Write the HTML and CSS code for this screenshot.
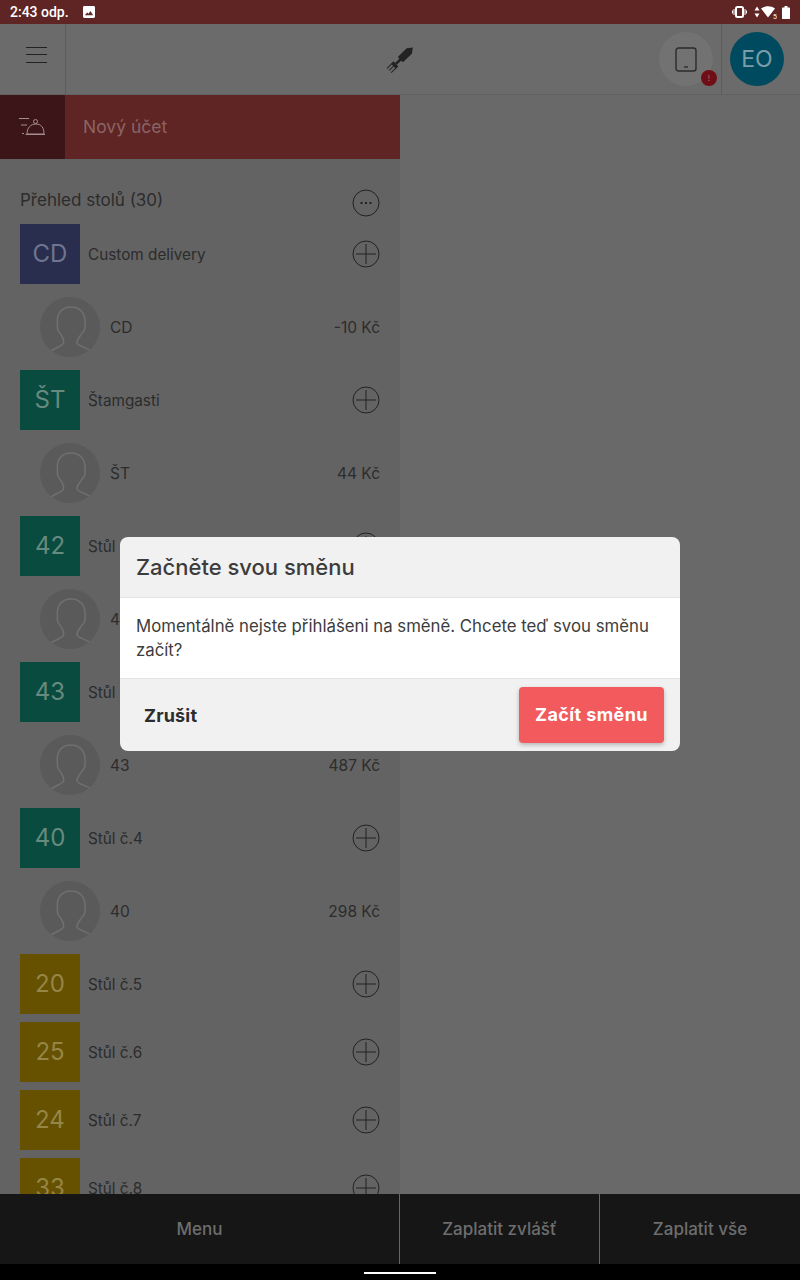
FILE: index.html
```html
<!DOCTYPE html>
<html lang="cs">
<head>
	<meta charset="UTF-8">
	<title>Přehled stolů</title>
	<link rel="stylesheet" href="styles.css">
</head>
<body>
	<svg class="defs" width="0" height="0">
		<symbol id="plus" viewBox="0 0 28 28">
			<circle cx="14" cy="14" r="13" fill="none" stroke="#222" stroke-width="1"/>
			<path d="M14 4V24M4 14H24" stroke="#222" stroke-width="1"/>
		</symbol>
		<symbol id="person" viewBox="0 0 60 60">
			<path d="M10 55C15 50 22 50 23.500 46C24.500 42 22 40 20 36C18 35 17 31 17.500 28C16 16 22 10 31 10C40 10 46 16 45 28C45.500 31 44 35 42 36C40 40 36.500 42 37 46C39 50 47 50 52 55" fill="none" stroke="#707070" stroke-width="1.500"/>
		</symbol>
	</svg>

	<div class="status-bar">
		<span class="clock">2:43 odp.</span>
		<svg class="status-image" width="12" height="12" viewBox="0 0 13 13">
			<rect width="13" height="13" rx="1.500" fill="#fff"/>
			<path d="M2 10L4.500 7L6 8.500L8 5.500L11 10Z" fill="#5f2424"/>
		</svg>
		<span class="status-right">
			<svg width="15" height="12" viewBox="0 0 15 12">
				<rect x="4" y="1" width="7" height="10" rx="1.500" fill="none" stroke="#fff" stroke-width="2"/>
				<path d="M2 3V9M0.500 4.500V7.500M13 3V9M14.500 4.500V7.500" stroke="#fff"/>
			</svg>
			<svg class="status-arrows" width="6" height="12" viewBox="0 0 6 12">
				<path d="M3 0.500L5.500 4.500H0.500ZM3 11.500L5.500 7.500H0.500Z" fill="#fff"/>
			</svg>
			<svg class="status-wifi" width="16" height="13" viewBox="0 0 16 13">
				<path d="M0 2.500C4 -0.500 10 -0.500 14 2.500L7 11.500Z" fill="#fff"/>
				<text x="12" y="12.500" class="wifi-s">5</text>
			</svg>
			<svg class="status-battery" width="8" height="13" viewBox="0 0 8 13">
				<path d="M2.500 0H5.500V1.500H7.500A.5 .5 0 0 1 8 2V12.500A.5 .5 0 0 1 7.500 13H.5A.5 .5 0 0 1 0 12.500V2A.5 .5 0 0 1 .5 1.500H2.500Z" fill="#fff"/>
			</svg>
		</span>
	</div>

	<div class="app">
		<div class="top-bar">
			<div class="menu-btn">
				<span class="burger"></span>
			</div>
			<div class="logo">
				<svg width="30" height="30" viewBox="0 0 30 30">
					<g transform="rotate(-44 15 15)" fill="#222">
						<path d="M-1.500 11.500H6V12.500H-1.500ZM-1.500 14.500H6V15.500H-1.500ZM-1.500 17.500H6V18.500H-1.500Z"/>
						<path d="M4.500 11.500H8V18.500H4.500Z"/>
						<path d="M8 13.700H15V16.300H8Z"/>
						<path d="M14 12A.8 .8 0 0 1 14.800 11.300H26.500L31.500 15L26.500 18.700H14.800A.8 .8 0 0 1 14 18Z"/>
					</g>
				</svg>
			</div>
			<div class="device">
				<svg width="22" height="25" viewBox="0 0 22 25">
					<rect x="1" y="1" width="20" height="23" rx="2.500" fill="none" stroke="#2b2b2b" stroke-width="1.400"/>
					<path d="M9 20H13" stroke="#2b2b2b" stroke-width="1.400"/>
				</svg>
				<span class="badge">!</span>
			</div>
			<div class="user-cell">
				<span class="user">EO</span>
			</div>
		</div>

		<div class="main">
			<div class="side">
				<div class="new-bill">
					<div class="new-bill-icon">
						<svg width="26" height="20" viewBox="0 0 26 20">
							<g fill="none" stroke="#a58e8e" stroke-width="1">
								<path d="M0 1.500H10M2 8H8M3 16.500H5"/>
								<path d="M8 17C8 11 11.500 7 17 7C22.500 7 25 11 25 17ZM6.500 17.500H26"/>
								<circle cx="16.500" cy="4.500" r="2"/>
							</g>
						</svg>
					</div>
					<div class="new-bill-text">Nový účet</div>
				</div>

				<div class="tables">
					<div class="tables-head">
						<span class="tables-title">Přehled stolů (30)</span>
						<svg width="28" height="28" viewBox="0 0 28 28">
							<circle cx="14" cy="14" r="13" fill="none" stroke="#222" stroke-width="1"/>
							<path d="M8.500 14H10.500M13 14H15M17.500 14H19.500" stroke="#222" stroke-width="2"/>
						</svg>
					</div>

					<div class="table">
						<span class="tile blue">CD</span>
						<span class="table-name">Custom delivery</span>
						<svg class="add"><use href="#plus"/></svg>
					</div>
					<div class="guest">
						<span class="avatar"><svg width="60" height="60"><use href="#person"/></svg></span>
						<span class="guest-name">CD</span>
						<span class="price">-10 Kč</span>
					</div>

					<div class="table">
						<span class="tile green">ŠT</span>
						<span class="table-name">Štamgasti</span>
						<svg class="add"><use href="#plus"/></svg>
					</div>
					<div class="guest">
						<span class="avatar"><svg width="60" height="60"><use href="#person"/></svg></span>
						<span class="guest-name">ŠT</span>
						<span class="price">44 Kč</span>
					</div>

					<div class="table">
						<span class="tile green">42</span>
						<span class="table-name">Stůl č.2</span>
						<svg class="add"><use href="#plus"/></svg>
					</div>
					<div class="guest">
						<span class="avatar"><svg width="60" height="60"><use href="#person"/></svg></span>
						<span class="guest-name">42</span>
					</div>

					<div class="table">
						<span class="tile green">43</span>
						<span class="table-name">Stůl č.3</span>
						<svg class="add"><use href="#plus"/></svg>
					</div>
					<div class="guest">
						<span class="avatar"><svg width="60" height="60"><use href="#person"/></svg></span>
						<span class="guest-name">43</span>
						<span class="price">487 Kč</span>
					</div>

					<div class="table">
						<span class="tile green">40</span>
						<span class="table-name">Stůl č.4</span>
						<svg class="add"><use href="#plus"/></svg>
					</div>
					<div class="guest">
						<span class="avatar"><svg width="60" height="60"><use href="#person"/></svg></span>
						<span class="guest-name">40</span>
						<span class="price">298 Kč</span>
					</div>

					<div class="table free">
						<span class="tile gold">20</span>
						<span class="table-name">Stůl č.5</span>
						<svg class="add"><use href="#plus"/></svg>
					</div>
					<div class="table free">
						<span class="tile gold">25</span>
						<span class="table-name">Stůl č.6</span>
						<svg class="add"><use href="#plus"/></svg>
					</div>
					<div class="table free">
						<span class="tile gold">24</span>
						<span class="table-name">Stůl č.7</span>
						<svg class="add"><use href="#plus"/></svg>
					</div>
					<div class="table free">
						<span class="tile gold">33</span>
						<span class="table-name">Stůl č.8</span>
						<svg class="add"><use href="#plus"/></svg>
					</div>
				</div>
			</div>
			<div class="detail"></div>
		</div>

		<div class="bottom-bar">
			<div class="bottom-btn menu">Menu</div>
			<div class="bottom-btn split">Zaplatit zvlášť</div>
			<div class="bottom-btn all">Zaplatit vše</div>
		</div>

		<div class="dialog-layer">
			<div class="dialog">
				<div class="dialog-title">Začněte svou směnu</div>
				<div class="dialog-body">Momentálně nejste přihlášeni na směně. Chcete teď svou směnu začít?</div>
				<div class="dialog-actions">
					<span class="cancel">Zrušit</span>
					<span class="confirm">Začít směnu</span>
				</div>
			</div>
		</div>
	</div>

	<div class="nav-bar"><span class="home"></span></div>
</body>
</html>
```

FILE: styles.css
```css
* {
	box-sizing: border-box;
}
html, body {
	height: 100%;
}
body {
	margin: 0;
	height: 1280px;
	overflow: hidden;
	display: flex;
	flex-direction: column;
	background: #000;
	font-family: "Inter", "Liberation Sans", sans-serif;
	color: #2c2c2c;
}
.defs {
	position: absolute;
}

/* status bar */
.status-bar {
	height: 24px;
	flex: none;
	display: flex;
	align-items: center;
	padding: 0 10px;
	background: #5f2424;
	color: #fff;
}
.clock {
	font-family: "Roboto", sans-serif;
	font-size: 14px;
	font-weight: 500;
}
.status-image {
	margin-left: 14px;
}
.status-right {
	margin-left: auto;
	display: flex;
	align-items: center;
}
.status-arrows {
	margin-left: 7px;
}
.status-wifi {
	margin-left: 1px;
}
.status-battery {
	margin-left: 5px;
}
.wifi-s {
	font-family: "Roboto", sans-serif;
	font-size: 7px;
	fill: #fff;
}

.app {
	flex: 1;
	position: relative;
	display: flex;
	flex-direction: column;
	min-height: 0;
}

/* top bar */
.top-bar {
	height: 71px;
	flex: none;
	display: flex;
	align-items: center;
	background: #6b6b6b;
	border-bottom: 1px solid #616161;
}
.menu-btn {
	width: 66px;
	height: 100%;
	display: flex;
	align-items: center;
	justify-content: center;
	border-right: 1px solid #5c5c5c;
	padding: 0 0 8px 7px;
}
.burger {
	width: 21px;
	height: 16px;
	border-top: 1.5px solid #222;
	border-bottom: 1.5px solid #222;
	position: relative;
}
.burger::after {
	content: "";
	position: absolute;
	left: 0;
	right: 0;
	top: 5.5px;
	height: 1.5px;
	background: #222;
}
.logo {
	margin-left: 320px;
	width: 30px;
	height: 30px;
}
.device {
	margin-left: 243px;
	width: 54px;
	height: 54px;
	border-radius: 50%;
	background: #727272;
	display: flex;
	align-items: center;
	justify-content: center;
	position: relative;
}
.badge {
	position: absolute;
	right: -4px;
	bottom: 0;
	width: 16px;
	height: 16px;
	border-radius: 50%;
	background: #700e15;
	color: #b07474;
	font-size: 8px;
	line-height: 16px;
	text-align: center;
}
.user-cell {
	margin-left: 8px;
	height: 100%;
	padding-left: 8px;
	border-left: 1px solid #5c5c5c;
	display: flex;
	align-items: center;
}
.user {
	width: 54px;
	height: 54px;
	border-radius: 50%;
	background: #004a60;
	color: #7a9da8;
	font-size: 23px;
	line-height: 54px;
	text-align: center;
}

/* left column */
.main {
	flex: 1;
	display: flex;
	min-height: 0;
}
.side {
	width: 400px;
	flex: none;
	background: #636363;
	overflow: hidden;
}
.detail {
	flex: 1;
	background: #696969;
}
.new-bill {
	height: 64px;
	display: flex;
	background: #5f2424;
}
.new-bill-icon {
	width: 65px;
	background: #3c1518;
	display: flex;
	align-items: center;
	justify-content: center;
	padding-right: 1px;
}
.new-bill-text {
	margin-left: 18px;
	font-size: 17.5px;
	line-height: 64px;
	color: #8a6464;
}
.tables {
	padding: 30px 20px 0;
}
.tables-head {
	display: flex;
	justify-content: space-between;
	height: 35px;
	font-size: 17px;
}
.tables-title {
	padding-top: 1px;
}
.table {
	display: flex;
	align-items: center;
	height: 60px;
	margin-bottom: 13px;
}
.table.free {
	margin-bottom: 8px;
}
.tile {
	width: 60px;
	height: 60px;
	flex: none;
	font-size: 24px;
	line-height: 60px;
	text-align: center;
}
.blue {
	background: #292d4e;
	color: #6f7590;
}
.green {
	background: #0a4b3f;
	color: #678a7f;
}
.gold {
	background: #655100;
	color: #958547;
}
.table-name {
	margin-left: 8px;
	font-size: 15.3px;
}
.add {
	margin-left: auto;
	width: 28px;
	height: 28px;
}
.guest {
	display: flex;
	align-items: center;
	height: 60px;
	margin-bottom: 13px;
	padding-left: 20px;
	font-size: 15.5px;
}
.avatar {
	width: 60px;
	height: 60px;
	border-radius: 50%;
	background: #5a5a5a;
	overflow: hidden;
}
.guest-name {
	margin-left: 10px;
}
.price {
	margin-left: auto;
}

/* bottom bar */
.bottom-bar {
	height: 70px;
	flex: none;
	display: flex;
	background: #161616;
	color: #6e6e6e;
	font-size: 17px;
	font-weight: 500;
}
.bottom-btn {
	display: flex;
	align-items: center;
	justify-content: center;
}
.menu {
	width: 400px;
	border-right: 1px solid #666;
}
.split {
	width: 200px;
	border-right: 1px solid #666;
}
.all {
	width: 200px;
}

/* dialog */
.dialog-layer {
	position: absolute;
	inset: 0;
	display: flex;
	align-items: center;
	justify-content: center;
}
.dialog {
	width: 560px;
	border-radius: 8px;
	overflow: hidden;
	background: #f1f1f1;
}
.dialog-title {
	height: 61px;
	padding-left: 16px;
	border-bottom: 1px solid #e3e3e3;
	font-size: 22px;
	font-weight: 500;
	line-height: 61px;
	color: #3c3c3c;
}
.dialog-body {
	height: 81px;
	padding: 16px 16px 0;
	background: #fff;
	border-bottom: 1px solid #e3e3e3;
	font-size: 16.8px;
	line-height: 24px;
	color: #3c3c3c;
}
.dialog-actions {
	height: 72px;
	display: flex;
	align-items: center;
	justify-content: space-between;
	padding: 0 16px 0 24px;
}
.cancel {
	font-size: 18px;
	font-weight: 700;
	letter-spacing: 0.2px;
	color: #2c2c2c;
}
.confirm {
	width: 145px;
	height: 56px;
	border-radius: 4px;
	background: #f25a5e;
	box-shadow: 0 2px 4px rgba(0, 0, 0, 0.25);
	color: #fff;
	font-size: 18px;
	font-weight: 700;
	letter-spacing: 0.4px;
	line-height: 56px;
	text-align: center;
}

/* navigation bar */
.nav-bar {
	height: 16px;
	flex: none;
	background: #000;
	display: flex;
	justify-content: center;
	padding-top: 8px;
}
.home {
	width: 72px;
	height: 2px;
	background: #fff;
}
```
